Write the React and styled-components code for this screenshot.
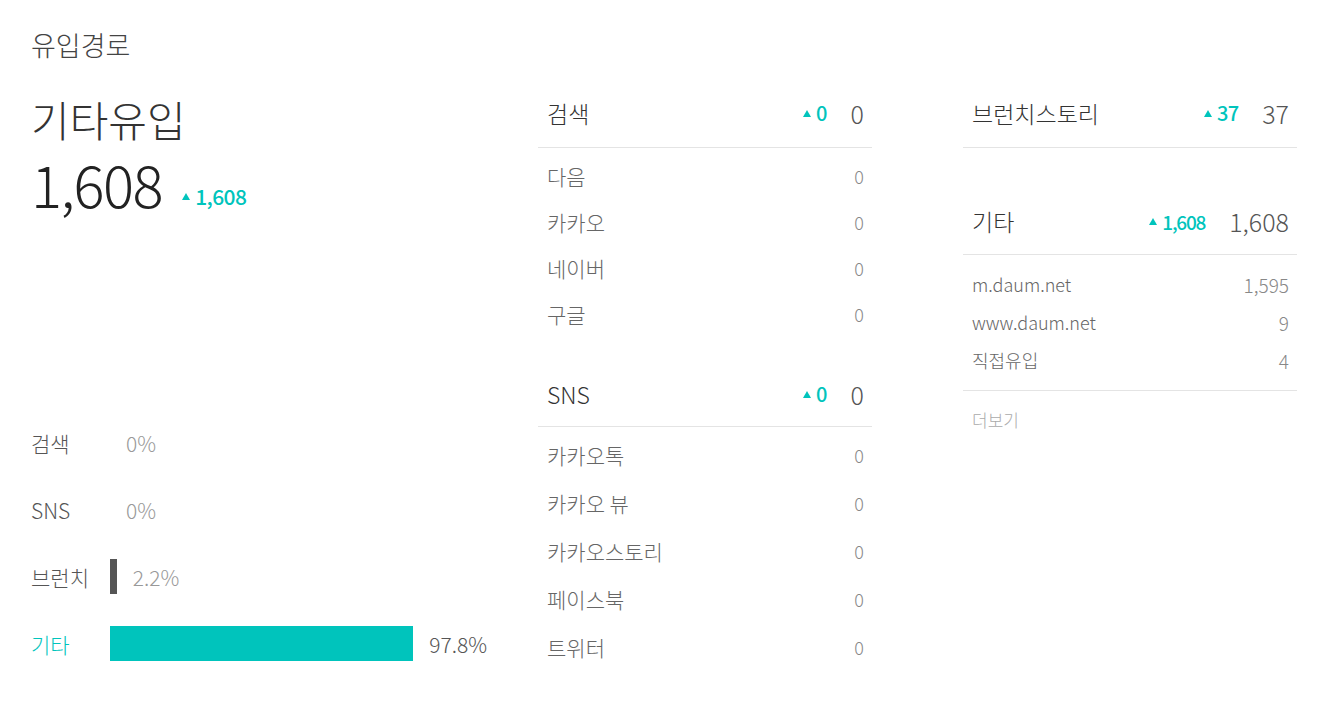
import React from "react";
import styled, { createGlobalStyle } from "styled-components";

const TEAL = "#00c4bc";

const GlobalStyle = createGlobalStyle`
  html, body {
    margin: 0;
    padding: 0;
    background: #fff;
  }
  body {
    font-family: "Noto Sans CJK KR", "Noto Sans", sans-serif;
    font-weight: 300;
    color: #333;
  }
`;

const Page = styled.div`
  width: 1320px;
  height: 716px;
  box-sizing: border-box;
  padding: 30px 0 0 31px;
  overflow: hidden;
`;

const Title = styled.h1`
  margin: 0;
  font-size: 27px;
  line-height: 30px;
  font-weight: 300;
  color: #444;
`;

const Columns = styled.div`
  display: flex;
  align-items: flex-start;
  margin-top: 19px;
`;

const LeftColumn = styled.section`
  flex: 0 0 507px;
  display: flex;
  flex-direction: column;
`;

const BigLabel = styled.div`
  margin-top: 14px;
  font-size: 42px;
  line-height: 52px;
  font-weight: 300;
  color: #333;
`;

const BigNumberRow = styled.div`
  display: flex;
  align-items: flex-end;
  gap: 20px;
`;

const BigNumber = styled.div`
  font-size: 58px;
  line-height: 76px;
  font-weight: 300;
  color: #222;
  letter-spacing: -1.5px;
`;

const DeltaWrap = styled.span`
  display: inline-flex;
  align-items: center;
  gap: 5px;
  color: ${TEAL};
  font-size: ${(p) => p.$size || 20}px;
  font-weight: 500;
  letter-spacing: ${(p) => p.$track ?? -0.8}px;
  line-height: 1;
  margin-bottom: ${(p) => p.$lift || 0}px;
`;

const Triangle = styled.i`
  display: inline-block;
  width: 0;
  height: 0;
  border-left: 4.5px solid transparent;
  border-right: 4.5px solid transparent;
  border-bottom: 7px solid ${TEAL};
`;

const Delta = ({ value, size, lift, track }) => (
  <DeltaWrap $size={size} $lift={lift} $track={track}>
    <Triangle />
    {value}
  </DeltaWrap>
);

const ShareList = styled.ul`
  list-style: none;
  margin: 188px 0 0;
  padding: 0;
`;

const ShareRow = styled.li`
  display: flex;
  align-items: center;
  height: 67px;
`;

const ShareLabel = styled.span`
  flex: 0 0 79px;
  font-size: 21px;
  color: ${(p) => (p.$active ? TEAL : "#555")};
`;

const Bar = styled.span`
  display: block;
  height: 35px;
  background: ${(p) => (p.$active ? TEAL : "#555")};
`;

const SharePct = styled.span`
  margin-left: 16px;
  font-size: 21px;
  color: ${(p) => (p.$strong ? "#555" : "#999")};
`;

const MidColumn = styled.section`
  flex: 0 0 334px;
  display: flex;
  flex-direction: column;
`;

const RightColumn = styled.section`
  flex: 0 0 334px;
  margin-left: 91px;
  display: flex;
  flex-direction: column;
`;

const Group = styled.div`
  margin-top: ${(p) => p.$top || 0}px;
`;

const GroupHead = styled.div`
  display: flex;
  align-items: center;
  height: ${(p) => p.$h}px;
  padding: 0 8px 0 9px;
  border-bottom: 1px solid #e4e4e4;
`;

const GroupName = styled.span`
  flex: 1;
  font-size: 23px;
  color: #333;
`;

const GroupTotal = styled.span`
  margin-left: 24px;
  font-size: 25px;
  color: #555;
`;

const ItemList = styled.ul`
  list-style: none;
  margin: 0;
  padding: ${(p) => p.$pt}px 8px ${(p) => p.$pb || 0}px 9px;
  border-bottom: ${(p) => (p.$ruled ? "1px solid #e4e4e4" : "none")};
`;

const Item = styled.li`
  display: flex;
  align-items: center;
  justify-content: space-between;
  height: ${(p) => p.$h}px;
`;

const ItemName = styled.span`
  font-size: ${(p) => p.$size}px;
  color: #666;
`;

const ItemValue = styled.span`
  font-size: ${(p) => p.$size}px;
  color: #888;
`;

const More = styled.a`
  display: block;
  margin-top: 19px;
  padding-left: 9px;
  font-size: 17px;
  line-height: 20px;
  color: #aaa;
  text-decoration: none;
`;

const shares = [
  { label: "검색", pct: 0 },
  { label: "SNS", pct: 0 },
  { label: "브런치", pct: 2.2 },
  { label: "기타", pct: 97.8, active: true },
];

const search = [
  ["다음", "0"],
  ["카카오", "0"],
  ["네이버", "0"],
  ["구글", "0"],
];

const sns = [
  ["카카오톡", "0"],
  ["카카오 뷰", "0"],
  ["카카오스토리", "0"],
  ["페이스북", "0"],
  ["트위터", "0"],
];

const etc = [
  ["m.daum.net", "1,595"],
  ["www.daum.net", "9"],
  ["직접유입", "4"],
];

const Section = ({ name, delta, total, h, top, deltaSize = 20, track, children }) => (
  <Group $top={top}>
    <GroupHead $h={h}>
      <GroupName>{name}</GroupName>
      <Delta value={delta} size={deltaSize} track={track} />
      <GroupTotal>{total}</GroupTotal>
    </GroupHead>
    {children}
  </Group>
);

export default function App() {
  return (
    <>
      <GlobalStyle />
      <Page>
        <Title>유입경로</Title>
        <Columns>
          <LeftColumn>
            <BigLabel>기타유입</BigLabel>
            <BigNumberRow>
              <BigNumber>1,608</BigNumber>
              <Delta value="1,608" size={21} lift={14} track={-0.6} />
            </BigNumberRow>
            <ShareList>
              {shares.map((s) => (
                <ShareRow key={s.label}>
                  <ShareLabel $active={s.active}>{s.label}</ShareLabel>
                  {s.pct > 0 && (
                    <Bar $active={s.active} style={{ width: `${s.pct * 3.1}px` }} />
                  )}
                  <SharePct $strong={s.active}>{s.pct}%</SharePct>
                </ShareRow>
              ))}
            </ShareList>
          </LeftColumn>

          <MidColumn>
            <Section name="검색" delta="0" total="0" h={68}>
              <ItemList $pt={5}>
                {search.map(([n, v]) => (
                  <Item key={n} $h={46}>
                    <ItemName $size={21}>{n}</ItemName>
                    <ItemValue $size={18}>{v}</ItemValue>
                  </Item>
                ))}
              </ItemList>
            </Section>
            <Section name="SNS" delta="0" total="0" h={64} top={25}>
              <ItemList $pt={4}>
                {sns.map(([n, v]) => (
                  <Item key={n} $h={48}>
                    <ItemName $size={21}>{n}</ItemName>
                    <ItemValue $size={18}>{v}</ItemValue>
                  </Item>
                ))}
              </ItemList>
            </Section>
          </MidColumn>

          <RightColumn>
            <Section name="브런치스토리" delta="37" total="37" h={68} />
            <Section name="기타" delta="1,608" total="1,608" h={66} top={40} deltaSize={19} track={-1.2}>
              <ItemList $pt={10} $pb={11} $ruled>
                {etc.map(([n, v]) => (
                  <Item key={n} $h={38}>
                    <ItemName $size={18}>{n}</ItemName>
                    <ItemValue $size={19}>{v}</ItemValue>
                  </Item>
                ))}
              </ItemList>
              <More href="#">더보기</More>
            </Section>
          </RightColumn>
        </Columns>
      </Page>
    </>
  );
}
